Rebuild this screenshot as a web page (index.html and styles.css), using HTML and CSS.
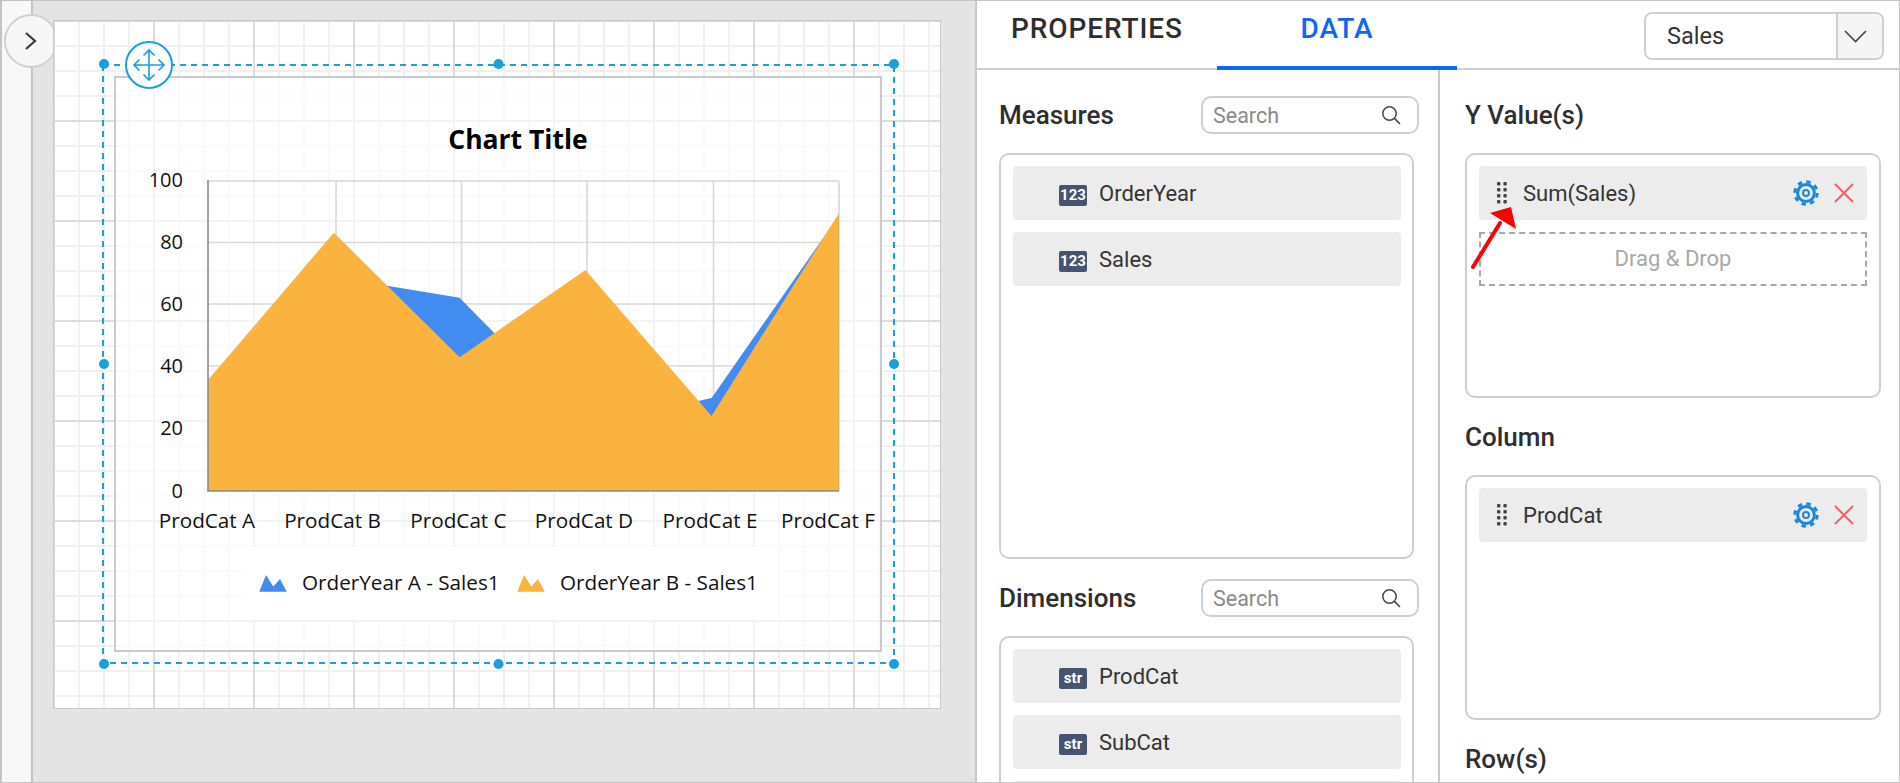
FILE: index.html
```html
<!DOCTYPE html>
<html lang="en">
<head>
    <meta charset="UTF-8">
    <meta name="viewport" content="width=device-width, initial-scale=1.0">
    <title>Chart Designer</title>
    <link rel="stylesheet" href="styles.css">
</head>
<body>
    <svg class="defs" width="0" height="0">
        <symbol id="icon-search" viewBox="0 0 20 20">
            <circle cx="8.5" cy="8.5" r="6.7" fill="none" stroke="#444" stroke-width="1.5"/>
            <path d="M13.4 13.4 L19 19" fill="none" stroke="#444" stroke-width="1.6"/>
        </symbol>
        <symbol id="icon-gear" viewBox="0 0 28 28">
            <circle cx="14" cy="14" r="8.4" fill="none" stroke="#1a86e0" stroke-width="3"/>
            <circle cx="14" cy="14" r="11.2" fill="none" stroke="#1a86e0" stroke-width="3" stroke-dasharray="4.4 4.4"/>
            <circle cx="14" cy="14" r="3" fill="none" stroke="#1a86e0" stroke-width="2"/>
        </symbol>
        <symbol id="icon-close" viewBox="0 0 20 20">
            <path d="M1 1 L19 19 M19 1 L1 19" fill="none" stroke="#f0616a" stroke-width="2"/>
        </symbol>
        <symbol id="icon-grip" viewBox="0 0 10 22">
            <g fill="#444">
                <rect x="0" y="0" width="3.4" height="3.4" rx="1"/><rect x="6.4" y="0" width="3.4" height="3.4" rx="1"/>
                <rect x="0" y="6" width="3.4" height="3.4" rx="1"/><rect x="6.4" y="6" width="3.4" height="3.4" rx="1"/>
                <rect x="0" y="12" width="3.4" height="3.4" rx="1"/><rect x="6.4" y="12" width="3.4" height="3.4" rx="1"/>
                <rect x="0" y="18" width="3.4" height="3.4" rx="1"/><rect x="6.4" y="18" width="3.4" height="3.4" rx="1"/>
            </g>
        </symbol>
    </svg>

    <div class="app">
        <div class="side-strip"></div>

        <button class="expand-btn">
            <svg width="14" height="20" viewBox="0 0 14 20"><path d="M2 2 L11 10 L2 18" fill="none" stroke="#3a3a3a" stroke-width="2.2"/></svg>
        </button>

        <div class="design-area">
            <div class="canvas">
                <svg class="chart" width="888" height="688" viewBox="53 20 888 688">
                    <rect class="chart-box" x="115" y="77" width="766" height="574"/>
                    <rect class="legend-bg" x="244" y="547" width="534" height="72"/>

                    <path class="plot-grid" d="M208 181 H839 M208 242.5 H839 M208 304 H839 M208 366 H839 M208 428 H839 M336 181 V491 M461.5 181 V491 M587 181 V491 M713.5 181 V491 M839 181 V491"/>
                    <polygon class="area-blue" points="208,380 333.8,276.9 459.6,297.7 585.4,426 711.6,398 838.8,215.6 838.8,491 208,491"/>
                    <polygon class="area-orange" points="208,380 333.8,232.7 459.6,357.3 585.4,270 711.6,416 838.8,213.3 838.8,491 208,491"/>
                    <path class="plot-axis" d="M208 180 V491 H839"/>

                    <text class="chart-title" x="518" y="149" text-anchor="middle">Chart Title</text>

                    <text class="tick-label" x="183" y="187" text-anchor="end">100</text>
                    <text class="tick-label" x="183" y="249" text-anchor="end">80</text>
                    <text class="tick-label" x="183" y="311" text-anchor="end">60</text>
                    <text class="tick-label" x="183" y="373" text-anchor="end">40</text>
                    <text class="tick-label" x="183" y="435" text-anchor="end">20</text>
                    <text class="tick-label" x="183" y="498" text-anchor="end">0</text>

                    <text class="axis-label" x="207" y="528" text-anchor="middle">ProdCat A</text>
                    <text class="axis-label" x="332.5" y="528" text-anchor="middle">ProdCat B</text>
                    <text class="axis-label" x="458.5" y="528" text-anchor="middle">ProdCat C</text>
                    <text class="axis-label" x="584" y="528" text-anchor="middle">ProdCat D</text>
                    <text class="axis-label" x="710" y="528" text-anchor="middle">ProdCat E</text>
                    <text class="axis-label" x="828" y="528" text-anchor="middle">ProdCat F</text>

                    <path class="area-blue" d="M259.3 591.8 L266 575 L273.3 586.5 L280 579 L286.8 591.8 Z"/>
                    <text class="axis-label" x="302" y="590">OrderYear A - Sales1</text>
                    <path class="area-orange" d="M517.3 591.8 L524 575 L531.3 586.5 L538 579 L544.8 591.8 Z"/>
                    <text class="axis-label" x="560" y="590">OrderYear B - Sales1</text>

                    <rect class="selection" x="103" y="65" width="791" height="598"/>
                    <g class="handles">
                        <circle cx="104" cy="64" r="5"/><circle cx="498.500" cy="64" r="5"/><circle cx="894" cy="64" r="5"/>
                        <circle cx="104" cy="364" r="5"/><circle cx="894" cy="364" r="5"/>
                        <circle cx="104" cy="664" r="5"/><circle cx="498.500" cy="664" r="5"/><circle cx="894" cy="664" r="5"/>
                    </g>

                    <circle class="move-ring" cx="149" cy="65" r="23"/>
                    <path class="move-arrows" d="M149 50 V80 M134 65 H164 M143.5 55.5 L149 50 L154.5 55.5 M143.5 74.5 L149 80 L154.5 74.5 M139.5 59.5 L134 65 L139.5 70.5 M158.5 59.5 L164 65 L158.5 70.5"/>
                </svg>
            </div>
        </div>

        <div class="panel">
            <div class="panel-tabs">
                <div class="tab">PROPERTIES</div>
                <div class="tab active">DATA</div>
                <div class="source-select">
                    <span class="source-value">Sales</span>
                    <span class="source-btn">
                        <svg width="23" height="13" viewBox="0 0 23 13"><path d="M1 1 L11.500 11.500 L22 1" fill="none" stroke="#444" stroke-width="1.6"/></svg>
                    </span>
                </div>
            </div>

            <div class="panel-body">
                <div class="col-fields">
                    <div class="section-head">
                        <h3 class="section-title">Measures</h3>
                        <div class="search-box">
                            <span class="search-text">Search</span>
                            <svg width="20" height="20"><use href="#icon-search"/></svg>
                        </div>
                    </div>
                    <div class="field-box measures-box">
                        <div class="field-item"><span class="type-badge">123</span>OrderYear</div>
                        <div class="field-item"><span class="type-badge">123</span>Sales</div>
                    </div>

                    <div class="section-head">
                        <h3 class="section-title">Dimensions</h3>
                        <div class="search-box">
                            <span class="search-text">Search</span>
                            <svg width="20" height="20"><use href="#icon-search"/></svg>
                        </div>
                    </div>
                    <div class="field-box">
                        <div class="field-item"><span class="type-badge">str</span>ProdCat</div>
                        <div class="field-item"><span class="type-badge">str</span>SubCat</div>
                        <div class="field-item"></div>
                    </div>
                </div>

                <div class="col-wells">
                    <h3 class="well-title">Y Value(s)</h3>
                    <div class="field-box well-box">
                        <div class="well-item">
                            <svg class="grip" width="10" height="22"><use href="#icon-grip"/></svg>
                            <span class="well-label">Sum(Sales)</span>
                            <svg class="gear" width="28" height="28"><use href="#icon-gear"/></svg>
                            <svg class="close" width="20" height="20"><use href="#icon-close"/></svg>
                        </div>
                        <div class="drop-target">Drag &amp; Drop</div>
                    </div>

                    <h3 class="well-title">Column</h3>
                    <div class="field-box well-box">
                        <div class="well-item">
                            <svg class="grip" width="10" height="22"><use href="#icon-grip"/></svg>
                            <span class="well-label">ProdCat</span>
                            <svg class="gear" width="28" height="28"><use href="#icon-gear"/></svg>
                            <svg class="close" width="20" height="20"><use href="#icon-close"/></svg>
                        </div>
                    </div>

                    <h3 class="well-title">Row(s)</h3>
                </div>
            </div>
        </div>

        <!-- Callout pointing at the drag handle -->
        <svg class="callout" width="50" height="66" viewBox="0 0 50 66">
            <path d="M3 62 L30 18" fill="none" stroke="#fe0000" stroke-width="4" stroke-linecap="round"/>
            <polygon points="41,2 20,8 46,24" fill="#fe0000"/>
        </svg>
    </div>
</body>
</html>
```

FILE: styles.css
```css
/* Page frame */
html, body {
    margin: 0;
    height: 100%;
    overflow: hidden;
    background: #fff;
}

.defs {
    position: absolute;
}

.app {
    position: relative;
    display: flex;
    box-sizing: border-box;
    width: 1900px;
    height: 783px;
    border: 1px solid #c4c4c4;
    border-left-width: 2px;
    overflow: hidden;
    font-family: Roboto, sans-serif;
    color: #333;
}

.side-strip {
    flex: 0 0 29px;
    background: #f8f8f8;
    border-right: 2px solid #c4c4c4;
}

.expand-btn {
    position: absolute;
    left: 2px;
    top: 13px;
    width: 54px;
    height: 54px;
    padding: 0;
    border: 2px solid #cfcfcf;
    border-radius: 50%;
    background: #f7f7f7;
    display: flex;
    align-items: center;
    justify-content: center;
}

/* Design surface */
.design-area {
    flex: 0 0 944px;
    box-sizing: border-box;
    padding: 19px 0 0 20px;
    background: #e4e4e4;
    border-right: 2px solid #c8c8c8;
}

.canvas {
    position: relative;
    box-sizing: border-box;
    width: 888px;
    height: 689px;
    border: 1px solid #c8c8c8;
    background-color: #fff;
    background-image:
        linear-gradient(to right, #dcdcdc 2px, transparent 2px),
        linear-gradient(to bottom, #dcdcdc 2px, transparent 2px),
        linear-gradient(to right, #f0f0f0 2px, transparent 2px),
        linear-gradient(to bottom, #f0f0f0 2px, transparent 2px);
    background-size: 100px 100%, 100% 100px, 25px 100%, 100% 25px;
    background-position: 99px 0, 0 99px, 24px 0, 0 24px;
}

.chart {
    position: absolute;
    left: -1px;
    top: -1px;
}

.chart-box {
    fill: rgba(255, 255, 255, 0.65);
    stroke: #cbcbcb;
    stroke-width: 2;
}

.legend-bg {
    fill: #fff;
}

.plot-grid {
    fill: none;
    stroke: #d8d8d8;
    stroke-width: 1.6;
}

.plot-axis {
    fill: none;
    stroke: #8a8a8a;
    stroke-width: 1.6;
}

.area-blue {
    fill: #428bf0;
}

.area-orange {
    fill: #fbb33f;
}

.chart-title {
    font-family: "Open Sans", sans-serif;
    font-size: 26.5px;
    font-weight: 700;
    fill: #000;
}

.axis-label {
    font-family: "Open Sans", sans-serif;
    font-size: 20.7px;
    fill: #111;
}

.tick-label {
    font-family: "Open Sans", sans-serif;
    font-size: 20px;
    fill: #111;
}

.selection {
    fill: none;
    stroke: #1a9fdc;
    stroke-width: 2;
    stroke-dasharray: 6 5;
}

.handles {
    fill: #1a9fdc;
}

.move-ring {
    fill: #fff;
    stroke: #1a9fdc;
    stroke-width: 2;
}

.move-arrows {
    fill: none;
    stroke: #1a9fdc;
    stroke-width: 1.6;
}

/* Right panel */
.panel {
    flex: 1;
    min-width: 0;
    background: #fff;
}

.panel-tabs {
    display: flex;
    box-sizing: border-box;
    height: 69px;
    border-bottom: 2px solid #cfcfcf;
}

.tab {
    box-sizing: border-box;
    width: 240px;
    height: 69px;
    padding-top: 10px;
    text-align: center;
    font-size: 28px;
    font-weight: 500;
    letter-spacing: 0.9px;
    line-height: 36px;
    color: #2e2e2e;
}

.tab.active {
    color: #0d66f5;
    border-bottom: 4px solid #0d66f5;
}

.source-select {
    display: flex;
    box-sizing: border-box;
    width: 240px;
    height: 48px;
    margin: 11px 0 0 187px;
    border: 2px solid #cfcfcf;
    border-radius: 8px;
    overflow: hidden;
}

.source-value {
    flex: 1;
    padding-left: 21px;
    font-size: 23.5px;
    line-height: 44px;
    color: #333;
}

.source-btn {
    flex: 0 0 46px;
    box-sizing: border-box;
    padding-right: 10px;
    display: flex;
    align-items: center;
    justify-content: center;
    background: #f5f5f5;
    border-left: 2px solid #cfcfcf;
}

.panel-body {
    display: flex;
}

.col-fields {
    flex: 0 0 463px;
    box-sizing: border-box;
    height: 713px;
    padding-left: 22px;
    border-right: 2px solid #c8c8c8;
    overflow: hidden;
}

.col-wells {
    flex: 1;
    padding-left: 25px;
}

.section-head {
    display: flex;
    align-items: center;
    justify-content: space-between;
    width: 420px;
    height: 38px;
    padding: 20px 0 19px;
}

.section-head:first-child {
    padding-top: 26px;
}

.section-title,
.well-title {
    margin: 0;
    font-size: 26px;
    font-weight: 500;
    color: #2e2e2e;
}

.well-title {
    height: 38px;
    line-height: 38px;
    padding: 20px 0 19px;
}

.well-title:first-child {
    padding-top: 26px;
}

.search-box {
    display: flex;
    align-items: center;
    justify-content: space-between;
    box-sizing: border-box;
    width: 218px;
    height: 38px;
    padding: 0 16px 0 10px;
    border: 2px solid #cfcfcf;
    border-radius: 10px;
}

.search-text {
    font-size: 21.5px;
    color: #8a8a8a;
}

.field-box {
    box-sizing: border-box;
    width: 415px;
    padding: 11px 11px 11px 12px;
    border: 2px solid #cfcfcf;
    border-radius: 10px;
}

.measures-box {
    height: 406px;
}

.well-box {
    width: 416px;
    height: 245px;
    padding-right: 12px;
}

.field-item {
    display: flex;
    align-items: center;
    box-sizing: border-box;
    height: 54px;
    margin-bottom: 12px;
    padding-left: 46px;
    background: #ececec;
    border-radius: 4px;
    font-size: 22px;
    color: #333;
}

.type-badge {
    width: 28px;
    height: 21px;
    margin: 4px 12px 0 0;
    background: #46546f;
    border-radius: 2px;
    color: #fff;
    font-size: 15px;
    font-weight: 700;
    line-height: 21px;
    text-align: center;
}

.well-item {
    display: flex;
    align-items: center;
    box-sizing: border-box;
    height: 54px;
    margin-bottom: 12px;
    padding: 0 13px 0 18px;
    background: #ececec;
    border-radius: 4px;
    font-size: 22px;
}

.well-label {
    flex: 1;
    margin-left: 16px;
    color: #333;
}

.close {
    margin-left: 14px;
}

.drop-target {
    box-sizing: border-box;
    height: 54px;
    border: 2px dashed #a8a8a8;
    font-size: 22px;
    line-height: 50px;
    text-align: center;
    color: #a8a8a8;
}

.callout {
    position: absolute;
    left: 1468px;
    top: 204px;
}
```
